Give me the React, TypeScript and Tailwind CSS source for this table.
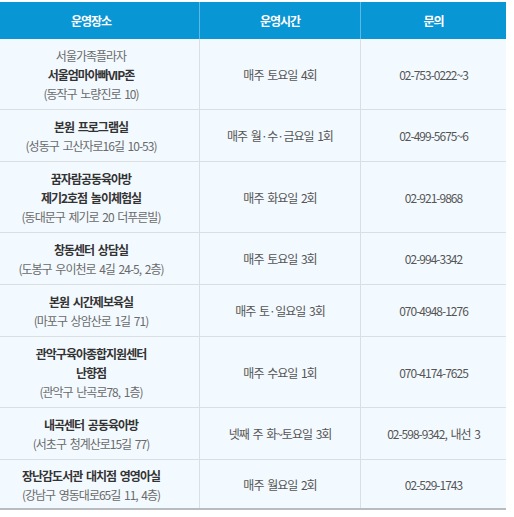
import React from "react";

type Row = {
  pre?: string;
  names: string[];
  addr: string;
  time: React.ReactNode;
  phone: string;
};

const Dot = () => <span className="tracking-[-0.5px]">·</span>;

const rows: Row[] = [
  { pre: "서울가족플라자", names: ["서울엄마아빠VIP존"], addr: "(동작구 노량진로 10)", time: "매주 토요일 4회", phone: "02-753-0222~3" },
  { names: ["본원 프로그램실"], addr: "(성동구 고산자로16길 10-53)", time: <>매주 월<Dot />수<Dot />금요일 1회</>, phone: "02-499-5675~6" },
  { names: ["꿈자람공동육아방", "제기2호점 놀이체험실"], addr: "(동대문구 제기로 20 더푸른빌)", time: "매주 화요일 2회", phone: "02-921-9868" },
  { names: ["창동센터 상담실"], addr: "(도봉구 우이천로 4길 24-5, 2층)", time: "매주 토요일 3회", phone: "02-994-3342" },
  { names: ["본원 시간제보육실"], addr: "(마포구 상암산로 1길 71)", time: <>매주 토<Dot />일요일 3회</>, phone: "070-4948-1276" },
  { names: ["관악구육아종합지원센터", "난향점"], addr: "(관악구 난곡로78, 1층)", time: "매주 수요일 1회", phone: "070-4174-7625" },
  { names: ["내곡센터 공동육아방"], addr: "(서초구 청계산로15길 77)", time: "넷째 주 화~토요일 3회", phone: "02-598-9342, 내선 3" },
  { names: ["장난감도서관 대치점 영영아실"], addr: "(강남구 영동대로65길 11, 4층)", time: "매주 월요일 2회", phone: "02-529-1743" },
];

export default function App() {
  return (
    <div
      className="w-[514px] h-[517px] bg-white pt-[2px] text-[12px] leading-[19px] tracking-[-1px] [word-spacing:2px]"
      style={{ fontFamily: '"Noto Sans CJK KR", "Noto Sans", sans-serif' }}
    >
      <div className="w-[506px]">
        <div className="grid grid-cols-[199px_161px_146px] h-[37px] bg-[#0896d5] text-white font-bold">
          <div className="flex items-center justify-center pr-[17px]">운영장소</div>
          <div className="flex items-center justify-center border-l border-[#5ab9e5]">운영시간</div>
          <div className="flex items-center justify-center border-l border-[#5ab9e5]">문의</div>
        </div>
        {rows.map((r, i) => {
          const last = i === rows.length - 1;
          return (
            <div
              key={i}
              className={
                "grid grid-cols-[199px_161px_146px] bg-[#f3faff] " +
                (last ? "border-b-2 border-[#b9bcbf]" : "border-b border-[#dcdfe2]")
              }
            >
              <div className={"flex flex-col items-center justify-center text-center pr-[17px] " + (last ? "pt-[6px] pb-[4px]" : "pt-[7px] pb-[6px]")}>
                {r.pre && <div className="text-[#6a6a6a]">{r.pre}</div>}
                {r.names.map((n, j) => (
                  <div key={j} className="font-bold text-[#333333]">{n}</div>
                ))}
                <div className="text-[#6a6a6a]">{r.addr}</div>
              </div>
              <div className="flex items-center justify-center text-[#555555] border-l border-[#dcdfe2]">{r.time}</div>
              <div className="flex items-center justify-center text-[#555555] border-l border-[#dcdfe2]">{r.phone}</div>
            </div>
          );
        })}
      </div>
    </div>
  );
}
